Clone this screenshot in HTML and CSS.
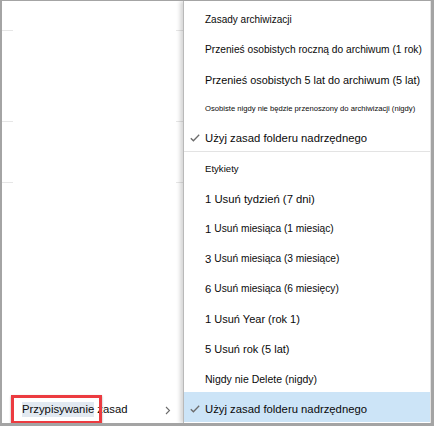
FILE: index.html
```html
<!DOCTYPE html>
<html lang="pl">
<head>
<meta charset="utf-8">
<link rel="stylesheet" href="styles.css">
</head>
<body>
<div class="frame">
  <div class="left">
    <div class="gap g1"></div>
    <div class="sep"><span class="seg-a"></span><span class="seg-b"></span></div>
    <div class="gap g2"></div>
    <div class="sep"><span class="seg-a"></span><span class="seg-b"></span></div>
    <div class="gap g3"></div>
    <div class="sep"><span class="seg-a"></span><span class="seg-b"></span></div>
    <div class="gap grow"></div>
    <div class="assign">
      <span class="assign-text"><span class="sel">Przypisywanie</span> zasad</span>
      <svg class="chev" width="6" height="9" viewBox="0 0 6 9"><polyline points="1,1 4.5,4.5 1,8" fill="none" stroke="#6b6b6b" stroke-width="1.1"/></svg>
      <div class="redbox"></div>
    </div>
  </div>
  <div class="menu">
    <div class="sec1">
      <div class="row r30"><span class="t-head">Zasady archiwizacji</span></div>
      <div class="row r30"><span class="t-m">Przenieś osobistych roczną do archiwum (1 rok)</span></div>
      <div class="row r30"><span class="t-ml">Przenieś osobistych 5 lat do archiwum (5 lat)</span></div>
      <div class="row r28"><span class="t-xs">Osobiste nigdy nie będzie przenoszony do archiwizacji (nigdy)</span></div>
      <div class="row r30">
        <svg class="check" width="10" height="8" viewBox="0 0 10 8"><polyline points="0.8,4.2 3.4,6.8 9.2,0.8" fill="none" stroke="#6b6b6b" stroke-width="1.3"/></svg>
        <span class="t-l">Użyj zasad folderu nadrzędnego</span>
      </div>
    </div>
    <div class="divider"></div>
    <div class="sec2">
      <div class="row r30"><span class="t-head2">Etykiety</span></div>
      <div class="row r30"><span class="t-l">1 Usuń tydzień (7 dni)</span></div>
      <div class="row r30"><span class="t-l">1</span><span class="t-s">Usuń miesiąca (1 miesiąc)</span></div>
      <div class="row r30"><span class="t-l">3</span><span class="t-s">Usuń miesiąca (3 miesiące)</span></div>
      <div class="row r30"><span class="t-l">6</span><span class="t-s">Usuń miesiąca (6 miesięcy)</span></div>
      <div class="row r30"><span class="t-l">1</span><span class="t-s2">Usuń Year (rok 1)</span></div>
      <div class="row r30"><span class="t-l">5</span><span class="t-s2">Usuń rok (5 lat)</span></div>
      <div class="row r30"><span class="t-n">Nigdy nie Delete (nigdy)</span></div>
      <div class="row r30 active">
        <svg class="check" width="10" height="8" viewBox="0 0 10 8"><polyline points="0.8,4.2 3.4,6.8 9.2,0.8" fill="none" stroke="#6b6b6b" stroke-width="1.3"/></svg>
        <span class="t-l">Użyj zasad folderu nadrzędnego</span>
      </div>
    </div>
  </div>
</div>
</body>
</html>
```

FILE: styles.css
```css
html, body {
  margin: 0;
  padding: 0;
  background: #ffffff;
}
body {
  font-family: "Liberation Sans", Arial, sans-serif;
  color: #0a0a0a;
}
.frame {
  width: 434px;
  height: 426px;
  box-sizing: border-box;
  border-top: 1px solid #a4a4a4;
  border-left: 2px solid #a4a4a4;
  border-right: 3px solid #a4a4a4;
  border-bottom: 3px solid #a4a4a4;
  display: flex;
  background: #ffffff;
  overflow: hidden;
}
.left {
  width: 181px;
  display: flex;
  flex-direction: column;
  position: relative;
}
.gap.g1 { height: 29px; }
.gap.g2 { height: 90px; }
.gap.g3 { height: 60px; }
.gap.grow { flex: 1; }
.sep {
  height: 1px;
  display: flex;
  justify-content: space-between;
}
.seg-a { width: 11px; background: #e6e6e6; }
.seg-b { width: 7px; background: #e6e6e6; }
.assign {
  height: 30px;
  display: flex;
  align-items: center;
  padding-left: 20px;
  position: relative;
}
.assign-text {
  font-size: 11.3px;
  line-height: 16px;
  padding-top: 2px;
}
.sel {
  background: #e2e9f1;
  padding: 1px 0 2px 0;
}
.chev {
  position: absolute;
  left: 163px;
  top: 13px;
}
.redbox {
  position: absolute;
  left: 9px;
  top: 2px;
  width: 85px;
  height: 23px;
  border: 3px solid #ec3b40;
  box-shadow: 0 1px 2px rgba(0,0,0,0.35);
}
.menu {
  width: 248px;
  box-sizing: border-box;
  border-left: 1px solid #b9b9b9;
  border-right: 1px solid #e3e3e3;
  box-shadow: -3px 0 4px rgba(0,0,0,0.16);
  position: relative;
  z-index: 1;
  background: #ffffff;
  display: flex;
  flex-direction: column;
}
.sec1 {
  padding-top: 2px;
}
.row {
  display: flex;
  align-items: center;
  padding-left: 21px;
  position: relative;
  white-space: nowrap;
  padding-top: 3px;
  box-sizing: border-box;
}
.r30 { height: 30px; }
.r28 { height: 28px; }
.divider {
  height: 1px;
  background: #e3e3e3;
}
.check {
  position: absolute;
  left: 6px;
  top: 13px;
}
.active {
  background: #cce4f7;
}
.t-head { font-size: 10px; }
.t-head2 { font-size: 9.6px; }
.t-m { font-size: 10.2px; }
.t-ml { font-size: 10.85px; }
.t-l { font-size: 11.3px; }
.t-xs { font-size: 7.65px; }
.t-s { font-size: 10.2px; margin-left: 3px; }
.t-s2 { font-size: 11px; margin-left: 3px; }
.t-n { font-size: 10.5px; }
```
